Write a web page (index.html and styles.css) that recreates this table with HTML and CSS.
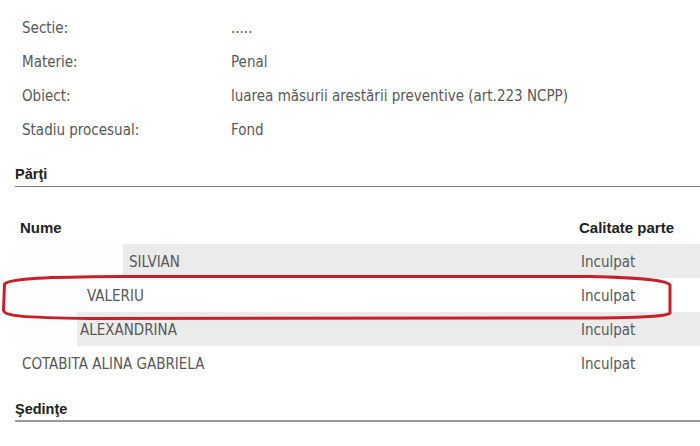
FILE: index.html
```html
<!DOCTYPE html>
<html lang="ro">
<head>
<meta charset="utf-8">
<title>Dosar</title>
<link rel="stylesheet" href="styles.css">
</head>
<body>
<div class="page">
  <div class="info">
    <div class="label">Sectie:</div><div class="value">.....</div>
    <div class="label">Materie:</div><div class="value">Penal</div>
    <div class="label">Obiect:</div><div class="value">luarea măsurii arestării preventive (art.223 NCPP)</div>
    <div class="label">Stadiu procesual:</div><div class="value">Fond</div>
  </div>

  <h2 class="section-title">Părţi</h2>

  <div class="parties">
    <div class="row head">
      <div class="name">Nume</div>
      <div class="role">Calitate parte</div>
    </div>
    <div class="row alt">
      <div class="name"><span class="redact r1"></span>SILVIAN</div>
      <div class="role cell">Inculpat</div>
    </div>
    <div class="row">
      <div class="name"><span class="redact r2"></span>VALERIU</div>
      <div class="role cell">Inculpat</div>
    </div>
    <div class="row alt">
      <div class="name"><span class="redact r3"></span>ALEXANDRINA</div>
      <div class="role cell">Inculpat</div>
    </div>
    <div class="row">
      <div class="name">COTABITA ALINA GABRIELA</div>
      <div class="role cell">Inculpat</div>
    </div>
  </div>

  <h2 class="section-title second">Şedinţe</h2>

  <svg class="mark" width="700" height="446" viewBox="0 0 700 446" aria-hidden="true">
    <path d="M 120 276.5 C 50 277, 10 278, 4.5 284 L 3.5 310 C 4 316, 20 317.5, 90 318.5 L 600 318 C 640 317.5, 667 316.5, 670 313 L 670 285 C 668 281, 640 277.5, 590 276.5 Z" fill="none" stroke="#c91f2b" stroke-width="3" stroke-linejoin="round"/>
  </svg>
</div>
</body>
</html>
```
FILE: styles.css
```css
html, body {
  margin: 0;
  padding: 0;
  background: #ffffff;
}

.page {
  position: relative;
  width: 700px;
  height: 446px;
  overflow: hidden;
  font-family: "DejaVu Sans Condensed", "DejaVu Sans", Verdana, sans-serif;
  font-stretch: condensed;
  font-size: 15px;
  color: #585858;
}

.info {
  display: grid;
  grid-template-columns: 209px 1fr;
  grid-auto-rows: 34px;
  padding: 11px 0 0 22px;
  align-items: center;
}

.section-title {
  margin: 18px 0 0 15px;
  padding-bottom: 3px;
  font-family: "Liberation Sans", Arial, sans-serif;
  font-stretch: normal;
  font-size: 14.5px;
  line-height: 18px;
  font-weight: bold;
  color: #222222;
  border-bottom: 1px solid #7a7a7a;
}

.section-title.second {
  margin-top: 20px;
  padding-bottom: 2px;
  border-bottom: 2px solid #9a9a9a;
}

.parties {
  margin: 24px 0 0 15px;
}

.row {
  display: flex;
  align-items: center;
  height: 34px;
}

.row.head {
  height: 33px;
  font-family: "Liberation Sans", Arial, sans-serif;
  font-stretch: normal;
  font-size: 15px;
  font-weight: bold;
  color: #222222;
}

.row.alt {
  background: #ebebeb;
}

.name {
  box-sizing: border-box;
  display: flex;
  align-items: center;
  height: 100%;
  width: 564px;
  padding-left: 7px;
  padding-top: 1px;
}

.row.head .name {
  padding-left: 5px;
  padding-top: 0;
}

.role.cell {
  padding-left: 2px;
  padding-top: 1px;
}

.redact {
  display: block;
  height: calc(100% + 1px);
  margin-top: -1px;
  background: #fdfdfd;
  margin-left: -7px;
}

.r1 { width: 108px; margin-right: 6px; }
.r2 { width: 72px; }
.r3 { width: 62px; margin-right: 3px; }

.mark {
  position: absolute;
  left: 0;
  top: 0;
  pointer-events: none;
}
```
